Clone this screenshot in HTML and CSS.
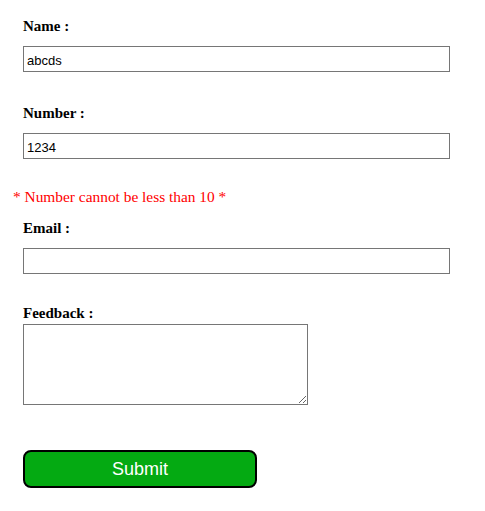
FILE: index.html
```html
<!DOCTYPE html>
<html>
<head>
<meta charset="utf-8">
<link rel="stylesheet" href="styles.css">
</head>
<body>
<form class="form">
  <div class="field">
    <label class="label">Name :</label>
    <input class="input" type="text" value="abcds">
  </div>
  <div class="field">
    <label class="label">Number :</label>
    <input class="input" type="text" value="1234">
  </div>
  <div class="error">* Number cannot be less than 10 *</div>
  <div class="field field-email">
    <label class="label">Email :</label>
    <input class="input" type="text" value="">
  </div>
  <div class="field field-feedback">
    <label class="label">Feedback :</label>
    <textarea class="textarea"></textarea>
  </div>
  <button class="submit" type="button">Submit</button>
</form>
</body>
</html>
```
FILE: styles.css
```css
html, body {
  margin: 0;
  padding: 0;
  background: #fff;
}
body {
  padding: 8px;
  font-family: "Liberation Serif", "Times New Roman", serif;
  font-size: 16px;
}
.form {
  display: flex;
  flex-direction: column;
  align-items: flex-start;
  padding-top: 9px;
}
.field {
  display: flex;
  flex-direction: column;
  align-items: flex-start;
  padding-left: 15px;
  margin-bottom: 32px;
}
.label {
  font-weight: bold;
  font-size: 15px;
  line-height: 18px;
  color: #000;
  margin-bottom: 11px;
}
.input {
  box-sizing: border-box;
  width: 427px;
  height: 26px;
  margin: 0;
  padding: 3px 3px 0;
  border: 1px solid #767676;
  border-radius: 0;
  font-family: "Liberation Sans", Arial, sans-serif;
  font-size: 13px;
  color: #000;
  background: #fff;
}
.error {
  color: #ff0000;
  font-size: 15.4px;
  line-height: 18px;
  margin-left: 5px;
  margin-top: -3px;
  margin-bottom: 13px;
}
.field-email {
  margin-bottom: 30px;
}
.field-feedback .label {
  margin-bottom: 2px;
}
.field-feedback {
  margin-bottom: 45px;
}
.textarea {
  box-sizing: border-box;
  width: 285px;
  height: 81px;
  margin: 0;
  border: 1px solid #767676;
  border-radius: 0;
  font-family: "Liberation Mono", monospace;
  font-size: 13px;
  resize: both;
}
.submit {
  box-sizing: border-box;
  margin-left: 15px;
  width: 234px;
  height: 38px;
  border: 2px solid #000;
  border-radius: 8px;
  background: #04aa12;
  color: #fff;
  font-family: "Liberation Sans", Arial, sans-serif;
  font-size: 18px;
  padding: 0;
}
```
